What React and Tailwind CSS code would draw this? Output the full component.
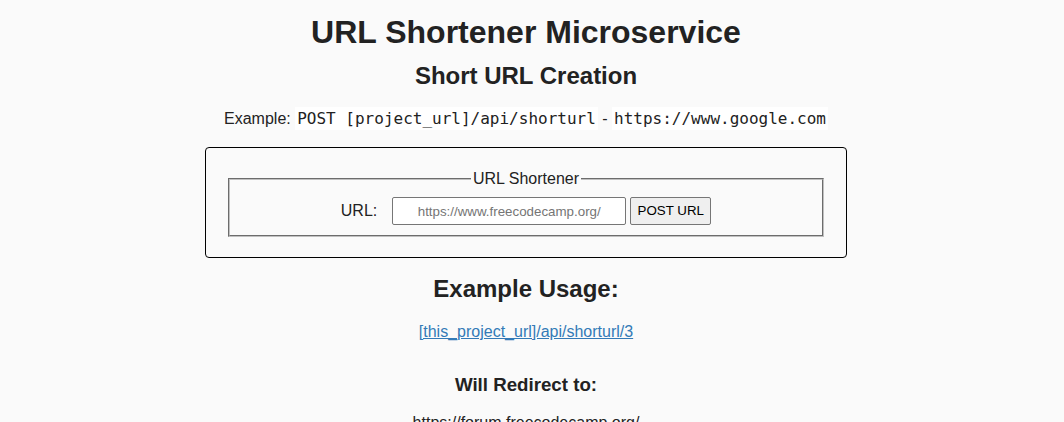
export default function App() {
  return (
    <div className="min-h-[422px] w-full bg-[#fafafa] text-[#222] font-['Liberation_Sans',Arial,sans-serif] overflow-hidden">
      <div className="w-[1052px] flex flex-col items-center text-center">
        <h1 className="mt-[14px] text-[32px] leading-[37px] font-bold">URL Shortener Microservice</h1>
        <h2 className="mt-[11px] text-[24px] leading-[28px] font-bold">Short URL Creation</h2>
        <p className="mt-[17px] text-[16px] leading-[24px]">
          Example:{" "}
          <code className="font-['DejaVu_Sans_Mono',monospace] text-[16px] bg-white p-[2px]">POST [project_url]/api/shorturl</code>
          {" "}-{" "}
          <code className="font-['DejaVu_Sans_Mono',monospace] text-[16px] bg-white p-[2px]">https://www.google.com</code>
        </p>
        <div className="mt-[16px] w-[642px] border border-black rounded-[4px] px-[22px] pt-[22px] pb-[20px]">
          <fieldset className="border-2 [border-style:groove] border-[#c0c0c0] pt-[9px] pb-[10px] min-w-0">
            <legend className="mx-auto px-[2px] text-[16px] leading-[18px]">URL Shortener</legend>
            <div className="flex items-center justify-center">
              <label className="text-[16px] leading-[18px] mr-[15px]">URL:</label>
              <input
                type="text"
                placeholder="https://www.freecodecamp.org/"
                className="w-[234px] h-[28px] bg-white border border-[#767676] rounded-[2px] text-center text-[13.33px] placeholder:text-[#757575] outline-none"
              />
              <button className="ml-[4px] w-[81px] h-[28px] bg-[#efefef] border border-[#767676] rounded-[2px] text-[13.33px] text-black">
                POST URL
              </button>
            </div>
          </fieldset>
        </div>
        <h2 className="mt-[17px] text-[24px] leading-[28px] font-bold">Example Usage:</h2>
        <a href="#" className="mt-[20px] text-[16px] leading-[18px] text-[#337ab7] underline">
          [this_project_url]/api/shorturl/3
        </a>
        <h3 className="mt-[33px] text-[18.72px] leading-[22px] font-bold">Will Redirect to:</h3>
        <p className="mt-[18px] text-[16px] leading-[18px]">https://forum.freecodecamp.org/</p>
      </div>
    </div>
  );
}
